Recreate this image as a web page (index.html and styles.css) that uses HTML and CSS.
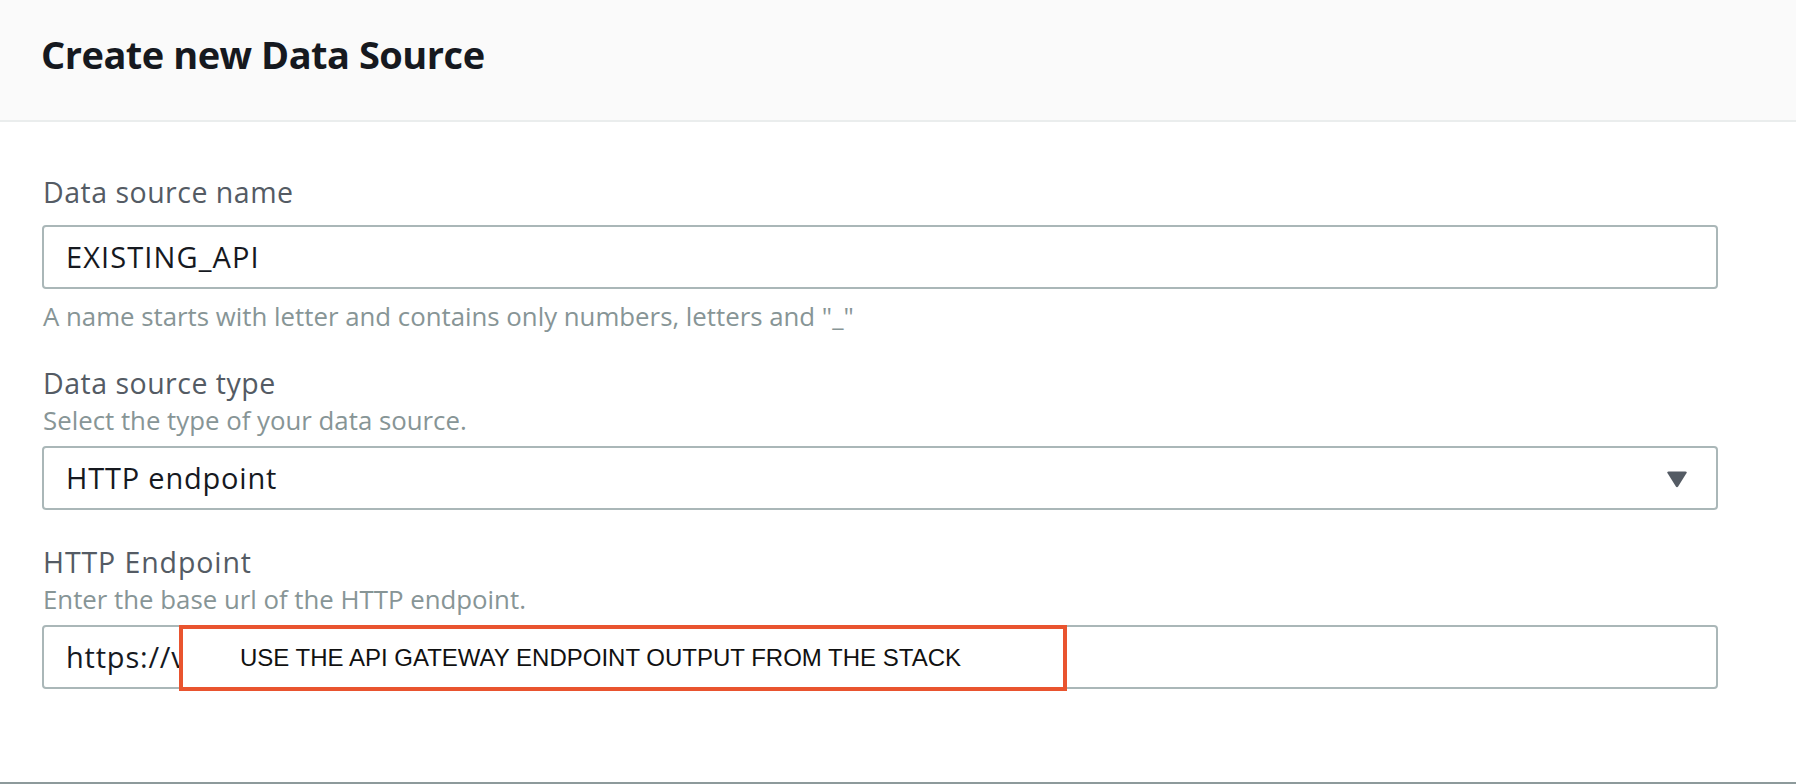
FILE: index.html
```html
<!DOCTYPE html>
<html lang="en">
<head>
<meta charset="utf-8">
<title>Create new Data Source</title>
<link rel="stylesheet" href="styles.css">
</head>
<body>
<div class="page">
  <header class="header">
    <h1 class="title">Create new Data Source</h1>
  </header>
  <main class="form">
    <div class="field field-first">
      <div class="label">Data source name</div>
      <div class="input">EXISTING_API</div>
      <div class="helper">A name starts with letter and contains only numbers, letters and "_"</div>
    </div>
    <div class="field field-second">
      <div class="label">Data source type</div>
      <div class="desc">Select the type of your data source.</div>
      <div class="input select">
        <span>HTTP endpoint</span>
        <svg class="caret" width="22" height="18" viewBox="0 0 22 18" aria-hidden="true"><path d="M2.5 1.5 H19.5 Q21.5 1.5 20.4 3.3 L12.3 16.3 Q11 18 9.7 16.3 L1.6 3.3 Q0.5 1.5 2.5 1.5 Z" fill="#545b64"/></svg>
      </div>
    </div>
    <div class="field field-last">
      <div class="label">HTTP Endpoint</div>
      <div class="desc">Enter the base url of the HTTP endpoint.</div>
      <div class="input-wrap">
        <div class="input">https://v</div>
        <div class="callout">USE THE API GATEWAY ENDPOINT OUTPUT FROM THE STACK</div>
      </div>
    </div>
  </main>
</div>
</body>
</html>
```
FILE: styles.css
```css
* { box-sizing: border-box; }
html, body { margin: 0; padding: 0; background: #ffffff; }
body { font-family: "Open Sans", "Noto Sans", sans-serif; color: #16191f; }

.page {
  height: 784px;
  border-bottom: 2px solid #8d9a9b;
  display: flex;
  flex-direction: column;
}

.header {
  height: 122px;
  background: #fafafa;
  border-bottom: 2px solid #eaeded;
  padding: 28px 0 0 41px;
}
.title {
  margin: 0;
  font-size: 38px;
  font-weight: 700;
  line-height: 52px;
  letter-spacing: -0.5px;
  color: #16191f;
}

.form {
  padding: 0 78px 0 42px;
}

.field-first { margin-top: 51px; }
.field-second { margin-top: 29px; }
.field-last { margin-top: 33px; }

.label {
  font-size: 28.5px;
  line-height: 38px;
  letter-spacing: 0.5px;
  color: #545b64;
  padding-left: 1px;
}
.field-last .label { letter-spacing: 0.9px; }
.desc {
  font-size: 25.8px;
  line-height: 36px;
  color: #879596;
  margin-bottom: 8px;
  padding-left: 1px;
}
.helper {
  font-size: 25.8px;
  line-height: 38px;
  color: #879596;
  margin-top: 8px;
  padding-left: 1px;
}

.field-first .label { margin-bottom: 14px; }

.input {
  height: 64px;
  border: 2px solid #aab7b8;
  border-radius: 4px;
  background: #ffffff;
  padding: 0 22px;
  font-size: 29px;
  line-height: 38px;
  letter-spacing: 0.8px;
  color: #16191f;
  display: flex;
  align-items: center;
  white-space: nowrap;
  overflow: hidden;
}
.field-first .input { letter-spacing: 1.1px; }
.select { justify-content: space-between; padding-right: 28px; }
.caret { display: block; margin-top: 2px; }

.input-wrap { position: relative; }
.callout {
  position: absolute;
  left: 137px;
  top: 0;
  width: 888px;
  height: 66px;
  border: 4px solid #e9542f;
  background: #ffffff;
  padding-left: 57px;
  display: flex;
  align-items: center;
  font-family: "Liberation Sans", Arial, sans-serif;
  font-size: 24px;
  color: #111111;
  white-space: nowrap;
}
```
